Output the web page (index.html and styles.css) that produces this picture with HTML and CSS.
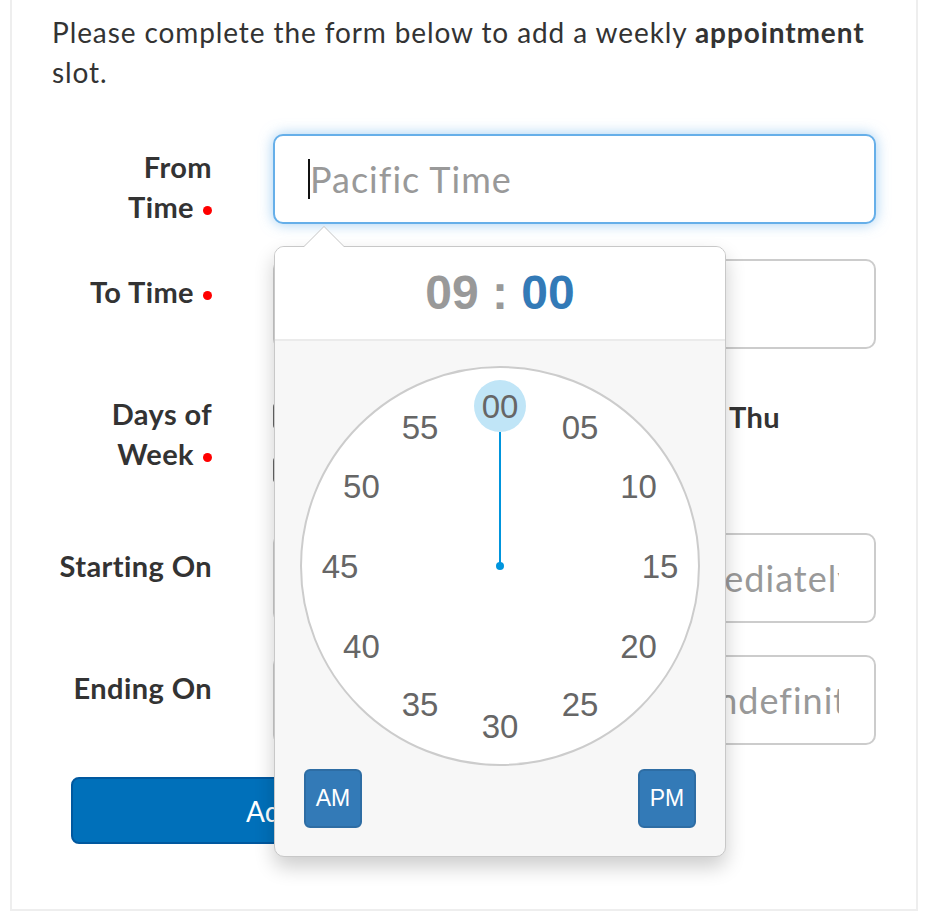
FILE: index.html
```html
<!DOCTYPE html>
<html>
<head>
<meta charset="utf-8">
<link rel="stylesheet" href="styles.css">
</head>
<body>
<div class="panel">
  <p class="intro">Please complete the form below to add a weekly <b>appointment</b> slot.</p>
  <form class="form">
    <div class="row">
      <label class="lbl">From <span class="nw">Time<span class="req"></span></span></label>
      <div class="field">
        <input class="input is-focus" type="text" placeholder="Pacific Time">
        <span class="caret"></span>
        <div class="popover">
          <div class="arrow"></div>
          <div class="pop-title"><span class="hh">09</span> : <span class="mm">00</span></div>
          <div class="pop-content">
            <div class="plate">
              <svg class="dial" width="400" height="400" viewBox="0 0 400 400">
                <circle cx="200" cy="200" r="199" fill="#fff" stroke="#ccc" stroke-width="2"/>
                <line x1="200" y1="200" x2="200" y2="66" stroke="#0095dd" stroke-width="2"/>
                <circle cx="200" cy="200" r="4" fill="#0095dd"/>
                <circle cx="200" cy="40" r="26" fill="#c0e5f7"/>
                <g class="ticks">
                  <text x="200" y="40">00</text>
                  <text x="280" y="61.4">05</text>
                  <text x="338.6" y="120">10</text>
                  <text x="360" y="200">15</text>
                  <text x="338.6" y="280">20</text>
                  <text x="280" y="338.6">25</text>
                  <text x="200" y="360">30</text>
                  <text x="120" y="338.6">35</text>
                  <text x="61.4" y="280">40</text>
                  <text x="40" y="200">45</text>
                  <text x="61.4" y="120">50</text>
                  <text x="120" y="61.4">55</text>
                </g>
              </svg>
            </div>
            <div class="ampm">
              <button type="button" class="ampm-btn">AM</button>
              <button type="button" class="ampm-btn">PM</button>
            </div>
          </div>
        </div>
      </div>
    </div>
    <div class="row">
      <label class="lbl">To <span class="nw">Time<span class="req"></span></span></label>
      <div class="field"><input class="input" type="text" placeholder=""></div>
    </div>
    <div class="row">
      <label class="lbl">Days of <span class="nw">Week<span class="req"></span></span></label>
      <div class="field days">
        <label class="day"><span class="box"></span>Sun</label>
        <label class="day"><span class="box"></span>Mon</label>
        <label class="day"><span class="box"></span>Tue</label>
        <label class="day"><span class="box"></span>Wed</label>
        <label class="day"><span class="box"></span>Thu</label>
        <label class="day"><span class="box"></span>Fri</label>
        <label class="day"><span class="box"></span>Sat</label>
      </div>
    </div>
    <div class="row">
      <label class="lbl">Starting On</label>
      <div class="field"><input class="input" type="text" placeholder="Leave blank to Start Immediately"></div>
    </div>
    <div class="row">
      <label class="lbl">Ending On</label>
      <div class="field"><input class="input" type="text" placeholder="Leave Empty To Repeat Indefinitely"></div>
    </div>
    <div class="actions">
      <button type="button" class="add-btn">Add</button>
    </div>
  </form>
</div>
</body>
</html>
```
FILE: styles.css
```css
html, body {
  margin: 0;
  padding: 0;
  background: #fff;
}
body {
  font-family: Lato, "Open Sans", sans-serif;
  color: #333;
}
.panel {
  margin-left: 10px;
  width: 908px;
  box-sizing: border-box;
  border: 2px solid #eeeeee;
  border-top: none;
  padding: 12px 40px 65px 40px;
}
.intro {
  margin: 0 0 42px 0;
  font-size: 28px;
  letter-spacing: 0.9px;
  line-height: 40px;
  color: #333;
}
.intro b {
  font-weight: 700;
}
.form {
  display: flex;
  flex-direction: column;
  gap: 32px;
}
.row {
  display: grid;
  grid-template-columns: 160px 1fr;
  column-gap: 61px;
  align-items: start;
}
.lbl {
  display: block;
  padding: 13px 0 0 5px;
  text-align: right;
  font-weight: 700;
  font-size: 29px;
  letter-spacing: 0.4px;
  line-height: 40px;
  color: #333;
}
.nw {
  white-space: nowrap;
}
.req {
  display: inline-block;
  width: 9px;
  height: 9px;
  border-radius: 50%;
  background: #ff0000;
  margin-left: 9px;
  vertical-align: 3px;
}
.field {
  position: relative;
}
.input {
  display: block;
  width: 100%;
  height: 90px;
  box-sizing: border-box;
  border: 2px solid #cccccc;
  border-radius: 10px;
  padding: 0 35px;
  font-family: Lato, "Open Sans", sans-serif;
  font-size: 36px;
  letter-spacing: 1px;
  color: #555;
  background: #fff;
  outline: none;
}
.input::placeholder {
  color: #999999;
}
.input.is-focus {
  border-color: #66afe9;
  box-shadow: 0 0 14px rgba(102, 175, 233, 0.6);
}
.caret {
  position: absolute;
  left: 35px;
  top: 25px;
  width: 2px;
  height: 40px;
  background: #111;
}
.days {
  display: grid;
  grid-template-columns: repeat(5, 105px);
  padding: 8px 0 4px 0;
}
.day {
  display: flex;
  align-items: center;
  height: 54px;
  font-weight: 700;
  font-size: 29px;
  letter-spacing: 0.4px;
  color: #333;
}
.box {
  width: 26px;
  height: 26px;
  box-sizing: border-box;
  border: 2px solid #666;
  border-radius: 4px;
  margin-right: 10px;
  flex: none;
}
.actions {
  padding-left: 19px;
}
.add-btn {
  display: block;
  width: 400px;
  height: 67px;
  box-sizing: border-box;
  background: #0070ba;
  border: 2px solid #00589f;
  border-radius: 8px;
  color: #fff;
  font-family: Lato, "Open Sans", sans-serif;
  font-size: 28px;
}
/* clock popover */
.popover {
  position: absolute;
  left: 1px;
  top: 112px;
  width: 452px;
  box-sizing: border-box;
  border: 1px solid #c8c8c8;
  border-radius: 10px;
  background: #f7f7f7;
  box-shadow: 0 10px 20px rgba(0, 0, 0, 0.2);
  z-index: 10;
}
.arrow {
  position: absolute;
  left: 28px;
  top: -21px;
  width: 0;
  height: 0;
  border-style: solid;
  border-width: 0 21px 21px 21px;
  border-color: transparent transparent #c4c4c4 transparent;
}
.arrow::after {
  content: "";
  position: absolute;
  left: -20px;
  top: 1px;
  border-style: solid;
  border-width: 0 20px 20px 20px;
  border-color: transparent transparent #fff transparent;
}
.pop-title {
  background: #fff;
  border-radius: 9px 9px 0 0;
  border-bottom: 2px solid #ebebeb;
  padding: 16px 28px;
  text-align: center;
  font-family: "Liberation Sans", Arial, sans-serif;
  font-weight: 700;
  font-size: 48px;
  line-height: 60px;
  color: #999999;
}
.mm {
  color: #337ab7;
}
.pop-content {
  padding: 25px 25px 28px 25px;
}
.plate {
  width: 400px;
  height: 400px;
}
.dial {
  display: block;
}
.ticks text {
  font-family: "Liberation Sans", Arial, sans-serif;
  font-size: 33px;
  fill: #666666;
  text-anchor: middle;
  dominant-baseline: central;
}
.ampm {
  display: flex;
  justify-content: space-between;
  margin-top: 3px;
  padding: 0 4px;
}
.ampm-btn {
  width: 58px;
  height: 59px;
  box-sizing: border-box;
  background: #337ab7;
  border: 2px solid #2e6da4;
  border-radius: 6px;
  color: #fff;
  font-family: "Liberation Sans", Arial, sans-serif;
  font-size: 23px;
  padding: 0;
}
```
